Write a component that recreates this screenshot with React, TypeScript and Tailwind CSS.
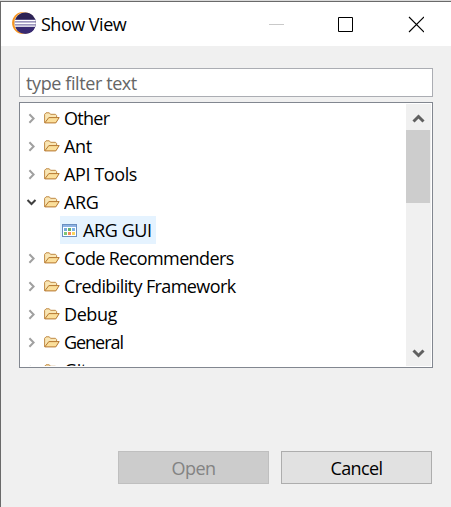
import React from "react";

type Item = { label: string; spacing: string; open?: boolean };

const items: Item[] = [
  { label: "Other", spacing: "tracking-[-0.7px]" },
  { label: "Ant", spacing: "tracking-[-0.3px]" },
  { label: "API Tools", spacing: "tracking-[-0.4px]" },
  { label: "ARG", spacing: "tracking-[-0.4px]", open: true },
  { label: "Code Recommenders", spacing: "tracking-[-0.62px]" },
  { label: "Credibility Framework", spacing: "tracking-[-0.6px]" },
  { label: "Debug", spacing: "tracking-[-0.4px]" },
  { label: "General", spacing: "tracking-[-1.05px]" },
  { label: "Git", spacing: "tracking-[-0.4px]" },
];

function EclipseLogo() {
  return (
    <svg className="ml-[11px] size-6 shrink-0" viewBox="0 0 24 24">
      <circle cx="11" cy="11" r="10.9" fill="#f7941e" />
      <circle cx="12.8" cy="11" r="10.7" fill="#fde3bd" />
      <circle cx="13.3" cy="11" r="10.6" fill="#2c2255" />
      <path d="M3.3 14.5h20a10.5 10.5 0 0 1-20 0z" fill="#382a72" />
      <path d="M3 7.5h20.6v7H3z" fill="#7d74a8" />
      <path d="M3 8h20.6v1.2H3zM2.8 10.6h21v1.7h-21zM3 13.6h20.4v1.2H3z" fill="#fff" />
    </svg>
  );
}

function Folder() {
  return (
    <svg className="ml-[7px] h-3 w-4 shrink-0" viewBox="0 0 16 12">
      <path d="M.6 10.8V2.3L2 .8h3.3l1.2 1.5h5L12.6 3.5v2" fill="#f9e6b4" stroke="#c08a45" strokeWidth="1" />
      <path d="M.8 10.9 4.8 5.6h10.4l-3.4 5.3z" fill="#fbdf9b" stroke="#b5772f" strokeWidth="1" strokeLinejoin="round" />
    </svg>
  );
}

function Arrow({ open }: { open?: boolean }) {
  return (
    <svg className="size-[11px] shrink-0" viewBox="0 0 11 11" fill="none" strokeWidth="2">
      {open ? <path d="M1.5 3 5.5 7l4-4" stroke="#404040" /> : <path d="M3.4 1.2 7.6 5.5l-4.2 4.3" stroke="#a0a0a0" />}
    </svg>
  );
}

function ViewIcon() {
  return (
    <svg className="ml-0.5 h-[13px] w-[15px] shrink-0" viewBox="0 0 15 13" shapeRendering="crispEdges">
      <path d="M0 0h15v13H0z" fill="#6a8fc0" />
      <path d="M1 1h13v2H1z" fill="#8db2e3" />
      <path d="M1 3h13v9H1z" fill="#fff" />
      <path d="M2 4h3v3H2z" fill="#75aadb" />
      <path d="M6 4h3v3H6z" fill="#63b16c" />
      <path d="M10 4h3v3h-3z" fill="#7bb2e3" />
      <path d="M2 8h3v3H2z" fill="#7fc477" />
      <path d="M6 8h3v3H6z" fill="#f5865a" />
      <path d="M10 8h3v3h-3z" fill="#fad35b" />
    </svg>
  );
}

export default function App() {
  return (
    <div className="flex h-[507px] w-[451px] flex-col border-t border-[#dadada] bg-[#f0f0f0] font-['Open_Sans','Noto_Sans',sans-serif] text-[18px] text-black">
      <div className="flex min-h-0 flex-1 flex-col border-t border-l border-[#6a6a6a]">
        <header className="flex h-11 shrink-0 items-center bg-white">
          <EclipseLogo />
          <h1 className="ml-[5px] w-[228px] tracking-[-0.5px]">Show View</h1>
          <svg className="h-[17px] w-[155px]" viewBox="0 0 155 17" fill="none">
            <path d="M0 8.5h15" stroke="#c9c9c9" />
            <path d="M69.5 1.5h14v14h-14z" stroke="#000" />
            <path d="m140 1 15 15M155 1l-15 15" stroke="#000" strokeWidth="1.1" />
          </svg>
        </header>
        <main className="pt-[22px] pl-[18px]">
          <input
            aria-label="Filter"
            placeholder="type filter text"
            className="block h-[29px] w-[414px] border border-[#abadb3] bg-white px-1.5 tracking-[-0.4px] outline-none placeholder:text-[#666]"
          />
          <div className="mt-[5px] flex h-[266px] w-[414px] border border-[#828790] bg-white p-px">
            <ul className="h-[262px] w-[385px] overflow-hidden">
              {items.map((item) => (
                <li key={item.label}>
                  <div className="flex h-7 items-center pl-[5px]">
                    <Arrow open={item.open} />
                    <Folder />
                    <span className={`ml-1 whitespace-nowrap leading-7 ${item.spacing}`}>{item.label}</span>
                  </div>
                  {item.open && (
                    <div className="ml-[39px] flex h-7 w-24 items-center bg-[#e5f3ff]">
                      <ViewIcon />
                      <span className="ml-1.5 whitespace-nowrap leading-7 tracking-[-0.4px]">ARG GUI</span>
                    </div>
                  )}
                </li>
              ))}
            </ul>
            <div className="flex h-[262px] w-[25px] flex-col bg-[#f0f0f0]">
              <svg className="h-[26px] w-[25px] shrink-0" viewBox="0 0 25 26" fill="none">
                <path d="m7.5 17.5 5-5 5 5" stroke="#606060" strokeWidth="3" />
              </svg>
              <div className="h-[73px] w-6 bg-[#cdcdcd]" />
              <svg className="mt-auto h-[26px] w-[25px] shrink-0" viewBox="0 0 25 26" fill="none">
                <path d="m7.5 10.5 5 5 5-5" stroke="#606060" strokeWidth="3" />
              </svg>
            </div>
          </div>
          <div className="mt-[83px] ml-[99px] flex gap-3 leading-[30px]">
            <button disabled className="h-[33px] w-[151px] border border-[#bfbfbf] bg-[#cccccc] pt-px tracking-[-0.5px] text-[#838383]">Open</button>
            <button className="h-[33px] w-[151px] border border-[#adadad] bg-[#e1e1e1] pt-px tracking-[-0.6px]">Cancel</button>
          </div>
        </main>
      </div>
    </div>
  );
}
